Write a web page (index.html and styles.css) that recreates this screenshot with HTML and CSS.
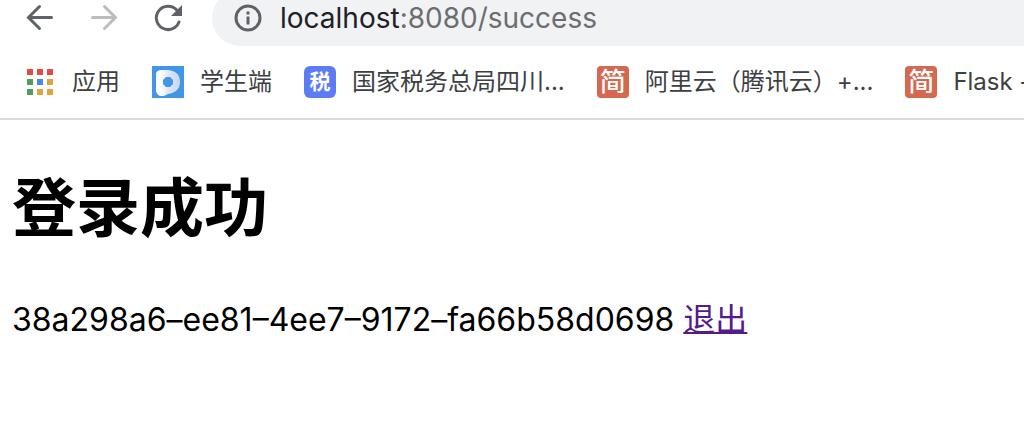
FILE: index.html
```html
<!DOCTYPE html>
<html lang="zh-CN">
<head>
<meta charset="utf-8">
<title>登录成功</title>
<link rel="stylesheet" href="styles.css">
</head>
<body>
<header class="browser">
  <div class="toolbar">
    <nav class="controls">
      <button class="control" type="button" aria-label="后退">
        <svg width="32" height="32" viewBox="0 0 32 32"><path d="M27.500 15.500H4.500M15.500 4.500 4.500 15.500 15.500 26.500"/></svg>
      </button>
      <button class="control" type="button" aria-label="前进" disabled>
        <svg width="32" height="32" viewBox="0 0 32 32"><path d="M4.500 15.500h23M16.500 4.500 27.500 15.500 16.500 26.500"/></svg>
      </button>
      <button class="control" type="button" aria-label="刷新">
        <svg width="32" height="32" viewBox="0 0 32 32"><path d="M27 20A11.700 11.700 0 1 1 24.700 8"/><path class="solid" d="M30 3V14H19Z"/></svg>
      </button>
    </nav>
    <div class="address">
      <svg class="info" width="28" height="28" viewBox="0 0 28 28"><circle cx="14" cy="14" r="12"/><path d="M14 12.500v8M14 7.500v3"/></svg>
      <span class="url"><span class="host">localhost</span>:8080/success</span>
    </div>
  </div>
  <nav class="bookmarks">
    <a class="bookmark apps" href="#">
      <svg width="26" height="26" viewBox="0 0 26 26"><path fill="#e34b40" d="M0 0h6v6H0zM10 0h6v6h-6zM20 0h6v6h-6z"/><path fill="#549b60" d="M0 10h6v6H0zM0 20h6v6H0z"/><path fill="#4688f1" d="M10 10h6v6h-6z"/><path fill="#e3a338" d="M20 10h6v6h-6zM10 20h6v6h-6zM20 20h6v6h-6z"/></svg>
      应用
    </a>
    <a class="bookmark" href="#">
      <svg width="32" height="32" viewBox="0 0 32 32"><defs><linearGradient id="shade"><stop offset=".25" stop-color="#fafcfe"/><stop offset=".5" stop-color="#dfe8f4"/><stop offset="1" stop-color="#c6d8ef"/></linearGradient></defs><path fill="#4296e8" d="M0 0h32v32H0z"/><path fill="url(#shade)" d="M8 4h8q12 1 12 12 0 10-12 12l-4 2H8q-4-2-4-6V8q0-3 4-4z"/><path fill="#4296e8" d="M14 11h4l3 3v4l-3 3h-4l-3-3v-4z"/></svg>
      学生端
    </a>
    <a class="bookmark" href="#"><span class="badge tax">税</span>国家税务总局四川...</a>
    <a class="bookmark" href="#"><span class="badge">简</span>阿里云（腾讯云）+...</a>
    <a class="bookmark" href="#"><span class="badge">简</span>Flask -</a>
  </nav>
</header>
<main class="page">
  <h1 class="title">登录成功</h1>
  <p class="session">38a298a6–ee81–4ee7–9172–fa66b58d0698 <a class="logout" href="#">退出</a></p>
</main>
</body>
</html>
```
FILE: styles.css
```css
body {
  margin: 0;
  background: #fff;
  color: #000;
  font-family: Inter, "Noto Sans CJK SC", sans-serif;
  overflow: hidden;
}
.browser {
  border-bottom: 2px solid #dadada;
}
.toolbar {
  display: flex;
  align-items: center;
  gap: 28px;
  margin-top: -10px;
  padding-left: 24px;
}
.controls {
  display: flex;
  gap: 32px;
}
.control {
  width: 32px;
  height: 32px;
  padding: 0;
  border: 0;
  background: none;
  color: #5f6368;
}
.control:disabled {
  color: #babcbe;
}
.control svg {
  display: block;
  fill: none;
  stroke: currentColor;
  stroke-width: 3;
  stroke-linecap: round;
}
.control .solid {
  fill: currentColor;
  stroke: none;
}
.address {
  flex: 1;
  display: flex;
  align-items: center;
  gap: 18px;
  box-sizing: border-box;
  height: 56px;
  padding-left: 22px;
  border-radius: 28px 0 0 28px;
  background: #f1f2f4;
}
.info {
  fill: none;
  stroke: #5f6368;
  stroke-width: 3;
}
.url {
  color: #6b6d70;
  font-size: 28px;
  line-height: 32px;
}
.host {
  color: #202124;
}
.bookmarks {
  display: flex;
  align-items: center;
  gap: 32px;
  height: 72px;
  padding-left: 24px;
  overflow: hidden;
}
.bookmark {
  display: flex;
  flex: none;
  align-items: center;
  gap: 16px;
  color: #3c4043;
  font-size: 24px;
  line-height: 32px;
  text-decoration: none;
  white-space: nowrap;
}
.apps {
  gap: 19px;
  padding-left: 3px;
}
.badge {
  width: 32px;
  height: 32px;
  border-radius: 4px;
  background: #d5694f;
  color: #fff;
  font-size: 26px;
  font-weight: 500;
  text-align: center;
}
.tax {
  border-radius: 6px;
  background: #5b7cf3;
  font-size: 21px;
  font-weight: 700;
}
.page {
  padding: 40px 12px;
}
.title {
  margin: 0;
  font-size: 64px;
  line-height: 96px;
}
.session {
  margin: 42px 0 0;
  font-size: 32px;
  line-height: 44px;
}
.logout {
  color: #551a8b;
  text-decoration-thickness: 2px;
}
```
